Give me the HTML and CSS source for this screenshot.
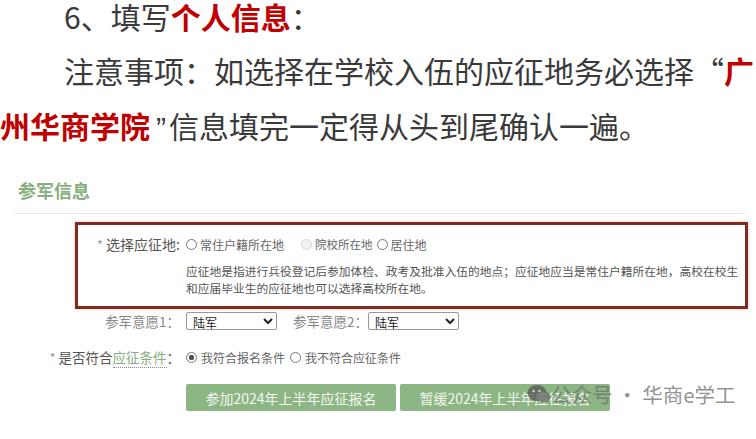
FILE: index.html
```html
<!DOCTYPE html>
<html lang="zh-CN">
<head>
  <meta charset="UTF-8" />
  <title>填写个人信息</title>
  <link rel="stylesheet" href="styles.css">
</head>
<body>
  <div class="article">
    <p class="step">6、填写<strong class="red">个人信息</strong>：</p>
    <p class="note">注意事项：如选择在学校入伍的应征地务必选择“<strong class="red">广<br>州华商学院</strong><span class="q">”</span>信息填完一定得从头到尾确认一遍。</p>
  </div>

  <div class="shot">
    <h3 class="shot-title">参军信息</h3>

    <div class="mark-box">
      <div class="row">
        <label class="row-label"><span class="star">*</span> 选择应征地:</label>
        <div class="options">
          <label class="opt"><input type="radio" name="place"> 常住户籍所在地</label>
          <label class="opt off"><input type="radio" name="place" disabled> 院校所在地</label>
          <label class="opt"><input type="radio" name="place"> 居住地</label>
        </div>
      </div>
      <div class="desc">应征地是指进行兵役登记后参加体检、政考及批准入伍的地点；应征地应当是常住户籍所在地，高校在校生和应届毕业生的应征地也可以选择高校所在地。</div>
    </div>

    <div class="row row-wish">
      <label class="row-label light">参军意愿1：</label>
      <select class="pick"><option>陆军</option></select>
      <label class="wish2 light">参军意愿2：</label>
      <select class="pick"><option>陆军</option></select>
    </div>

    <div class="row row-cond">
      <label class="row-label"><span class="star">*</span> 是否符合<span class="link">应征条件</span>：</label>
      <div class="options">
        <label class="opt"><input type="radio" name="cond" checked> 我符合报名条件</label>
        <label class="opt"><input type="radio" name="cond"> 我不符合应征条件</label>
      </div>
    </div>

    <div class="actions">
      <button class="btn">参加2024年上半年应征报名</button>
      <button class="btn">暂缓2024年上半年应征报名</button>
    </div>

    <div class="watermark">
      <svg width="24" height="20" viewBox="0 0 24 20">
        <ellipse cx="10" cy="9" rx="9.5" ry="8" fill="#555" />
        <circle cx="6.5" cy="7" r="1.3" fill="#cfd8c8" />
        <circle cx="12.5" cy="7" r="1.3" fill="#cfd8c8" />
        <ellipse cx="17" cy="13" rx="6.5" ry="5.5" fill="#6a6a6a" />
      </svg>
      <span>公众号 · 华商e学工</span>
    </div>
  </div>
</body>
</html>
```

FILE: styles.css
```css
/* Page */
body {
  margin: 0;
  background: #fff;
  font-family: "Noto Sans CJK SC", "Noto Sans", sans-serif;
  color: #333;
  overflow: hidden;
}

/* Article text */
.article p {
  margin: 0;
  font-size: 30px;
  color: #3a3a3a;
  text-indent: 64px;
  white-space: nowrap;
}

.article .step {
  line-height: 32px;
}

.article .note {
  margin-top: 11px;
  line-height: 55px;
}

.red {
  color: #c00000;
  font-weight: bold;
}

.q {
  font-family: "Liberation Sans", sans-serif;
  margin: 0 3px 0 6px;
}

/* Screenshot of the form */
.shot {
  position: relative;
  margin-top: 23px;
  font-size: 12px;
  color: #666;
}

.shot-title {
  margin: 0 11px 0 15px;
  padding: 0 0 11px 3px;
  font-size: 18px;
  line-height: 24px;
  font-weight: bold;
  color: #88b07e;
  border-bottom: 1px solid #e4e4e4;
}

.mark-box {
  margin: 8px 8px 0 75px;
  padding: 10px 0;
  border: 3px solid #7f2b22;
  box-shadow: 0 0 3px rgba(200, 80, 60, 0.35);
}

.row {
  display: flex;
  align-items: center;
  height: 18px;
}

.row-label {
  flex: none;
  width: 186px;
  padding-right: 6px;
  box-sizing: border-box;
  text-align: right;
  font-size: 13.5px;
  color: #555;
  white-space: nowrap;
}

.mark-box .row-label {
  width: 108px;
  font-size: 14px;
}

.row-label.light,
.wish2 {
  font-size: 13.5px;
  color: #888;
}

.star {
  color: #999;
  font-size: 13px;
}

.link {
  color: #8aab80;
  border-bottom: 1px dotted #888;
}

.options {
  display: flex;
  align-items: center;
  gap: 5px;
}

.opt {
  display: flex;
  align-items: center;
  gap: 2px;
  color: #666;
  white-space: nowrap;
}

.opt input {
  appearance: none;
  flex: none;
  width: 11px;
  height: 11px;
  margin: 0 1px 0 0;
  border: 1px solid #777;
  border-radius: 50%;
  background: #fff;
  box-sizing: border-box;
}

.opt input:checked {
  background: radial-gradient(circle, #555 0 2.5px, #fff 3px);
}

.opt.off {
  margin: 0 -1px 0 12px;
  font-size: 11.5px;
}

.opt.off input {
  border-color: #d6d6d6;
  background: #f2f2f2;
}

.desc {
  margin: 9px 0 0 108px;
  font-size: 11.75px;
  line-height: 17px;
  color: #555;
}

.row-wish {
  margin-top: 3px;
}

.pick {
  flex: none;
  width: 91px;
  height: 18px;
  margin: 0;
  padding: 0 2px;
  font-family: inherit;
  font-size: 12px;
  color: #222;
  border: 1px solid #999;
  border-radius: 2px;
  background: #fff;
}

.wish2 {
  flex: none;
  width: 91px;
  text-align: right;
}

.row-cond {
  margin-top: 18px;
}

.row-cond .opt {
  gap: 3px;
}

.actions {
  display: flex;
  gap: 4px;
  margin: 18px 0 0 186px;
}

.btn {
  width: 210px;
  height: 27px;
  border: none;
  border-radius: 2px;
  background: #8db685;
  color: #f3f7f0;
  font-family: inherit;
  font-size: 14px;
}

/* Watermark over the buttons */
.watermark {
  position: absolute;
  left: 527px;
  top: 201px;
  display: flex;
  align-items: center;
  font-size: 20.5px;
  color: rgba(110, 110, 110, 0.75);
}

.watermark svg {
  opacity: 0.75;
}
```
